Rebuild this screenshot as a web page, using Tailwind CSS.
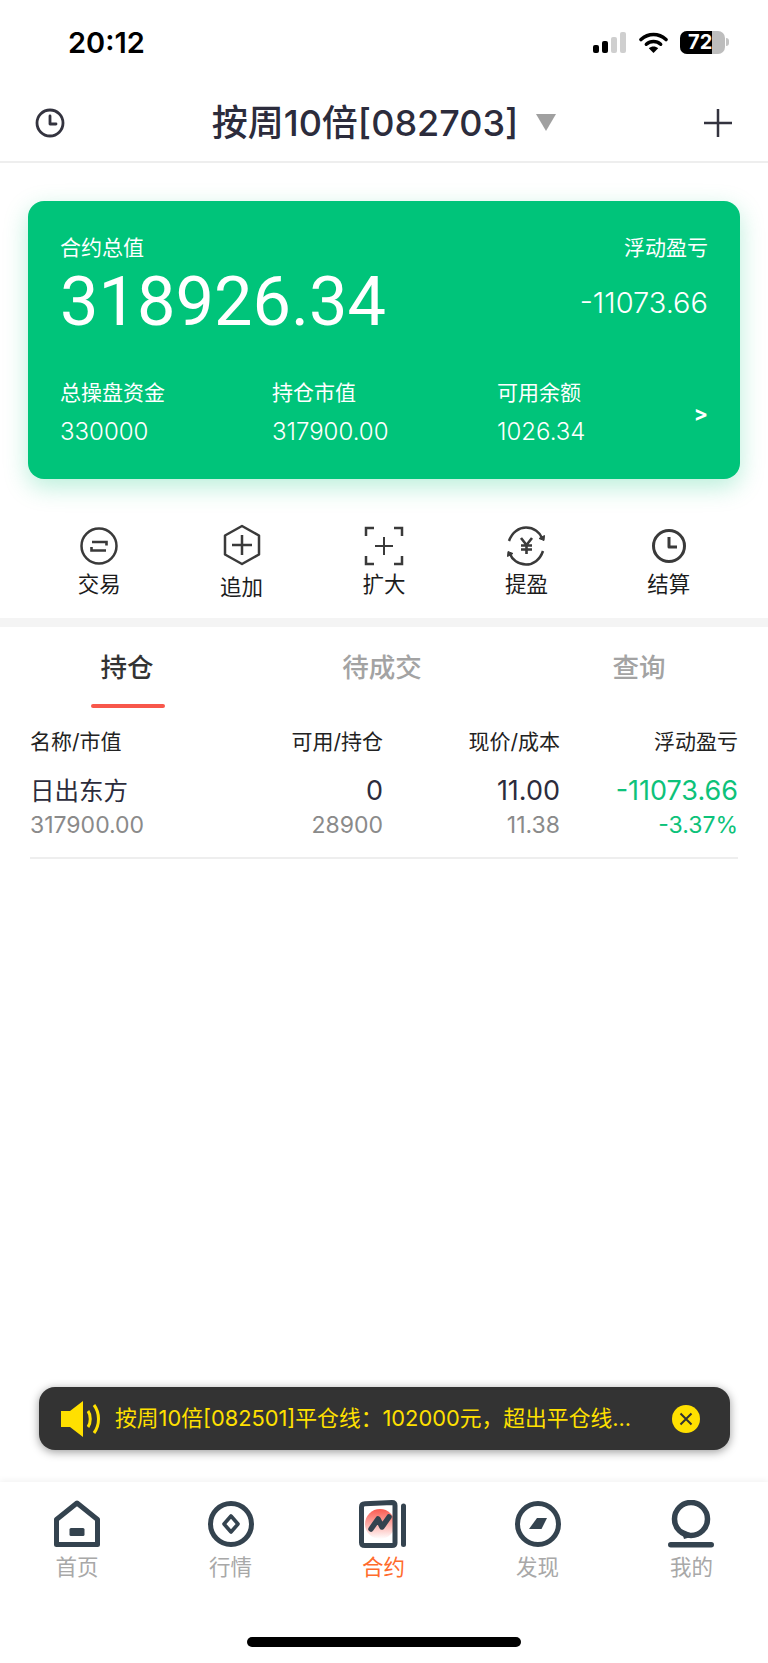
<!DOCTYPE html>
<html lang="zh-CN">
<head>
  <meta charset="UTF-8">
  <meta name="viewport" content="width=device-width, initial-scale=1.0">
  <title>合约</title>
  <script src="https://cdn.jsdelivr.net/npm/@tailwindcss/browser@4"></script>
</head>
<body class="bg-white font-['Inter','Noto_Sans_CJK_SC',sans-serif]">
  <div class="relative w-[768px] h-[1663px] overflow-hidden bg-white flex flex-col">

    <!-- status bar -->
    <div class="h-[84px] shrink-0 flex items-center justify-between pl-[68px] pr-[39px]">
      <span class="text-[29px] font-semibold text-black leading-none">20:12</span>
      <div class="flex items-center">
        <svg width="33" height="21" viewBox="0 0 33 21" class="mr-[13px]">
          <rect x="0" y="13" width="6" height="8" rx="2" fill="#000"/>
          <rect x="9" y="9" width="6" height="12" rx="2" fill="#000"/>
          <rect x="18" y="5" width="6" height="16" rx="2" fill="#cfcfcf"/>
          <rect x="27" y="0" width="6" height="21" rx="2" fill="#cfcfcf"/>
        </svg>
        <svg width="29" height="21" viewBox="0 0 29 21" class="mr-[12px]">
          <path d="M2 7.5C9.500 .8 19.500 .8 27 7.500" fill="none" stroke="#000" stroke-width="3.600" stroke-linecap="round"/>
          <path d="M7.300 12.300C11.500 8.500 17.500 8.500 21.700 12.300" fill="none" stroke="#000" stroke-width="3.400" stroke-linecap="round"/>
          <path d="M14.500 21L9.800 16.200C12.600 13.900 16.400 13.900 19.200 16.200Z" fill="#000"/>
        </svg>
        <div class="relative w-[45px] h-[23px] rounded-[7px] overflow-hidden bg-[#bdbdbd]">
          <div class="absolute left-0 top-0 bottom-0 w-[32px] bg-black"></div>
          <span class="absolute left-[8px] top-0 text-[20px] leading-[23px] font-bold text-white">72</span>
        </div>
        <div class="w-[3px] h-[8px] rounded-r-full bg-[#c4c4c4] ml-[1px]"></div>
      </div>
    </div>

    <!-- header -->
    <div class="h-[79px] shrink-0 border-b-2 border-[#eeeeee] flex items-center justify-between pl-[35px] pr-[35px]">
      <svg width="30" height="30" viewBox="0 0 30 30" fill="none" stroke="#33333f" stroke-width="2.800">
        <circle cx="15" cy="15" r="13"/>
        <path d="M15 8V16H21" stroke-linecap="round" stroke-linejoin="round"/>
      </svg>
      <div class="flex items-center">
        <span class="text-[36px] leading-none text-[#2c2c3c] font-medium">按周10倍[082703]</span>
        <div class="ml-[18px] w-0 h-0 border-l-[10px] border-r-[10px] border-t-[17px] border-l-transparent border-r-transparent border-t-[#a0a0a0]"></div>
      </div>
      <svg width="30" height="30" viewBox="0 0 30 30" fill="none" stroke="#33333f" stroke-width="2.500">
        <path d="M15 1V29M1 15H29"/>
      </svg>
    </div>

    <!-- summary card -->
    <div class="mt-[38px] mx-[28px] h-[278px] shrink-0 rounded-[16px] bg-[#00c47a] shadow-[0_8px_24px_rgba(0,196,122,0.28)] px-[32px] pt-[33px] text-white flex flex-col">
      <div class="flex justify-between">
        <span class="text-[21px] leading-[28px]">合约总值</span>
        <span class="text-[21px] leading-[28px]">浮动盈亏</span>
      </div>
      <div class="flex justify-between items-center h-[70px] mt-[5px]">
        <span class="text-[68.500px] leading-none font-normal font-['Roboto','Noto_Sans_CJK_SC',sans-serif]">318926.34</span>
        <span class="text-[29px] leading-none font-light">-11073.66</span>
      </div>
      <div class="flex mt-[42px]">
        <div class="w-[212px]">
          <div class="text-[21px] leading-[28px]">总操盘资金</div>
          <div class="text-[24px] leading-[28px] mt-[11px] font-light">330000</div>
        </div>
        <div class="w-[225px]">
          <div class="text-[21px] leading-[28px]">持仓市值</div>
          <div class="text-[24px] leading-[28px] mt-[11px] font-light">317900.00</div>
        </div>
        <div class="flex-1">
          <div class="text-[21px] leading-[28px]">可用余额</div>
          <div class="text-[24px] leading-[28px] mt-[11px] font-light">1026.34</div>
        </div>
        <span class="text-[21px] font-bold self-center mt-[3px]">&gt;</span>
      </div>
    </div>

    <!-- actions -->
    <div class="mt-[47px] px-[28px] grid grid-cols-5 h-[92px] shrink-0 text-[21.5px] text-[#1c1c1c] text-center">
      <div class="flex flex-col items-center">
        <svg width="40" height="40" viewBox="0 0 40 40" fill="none" stroke="#3a3a3a" stroke-width="2.500">
          <circle cx="20" cy="20" r="17.500"/>
          <path d="M13 16H27.500V19.500M27 24.500H12.500V21" stroke-width="2.600"/>
        </svg>
        <span class="leading-[28px] mt-[4px]">交易</span>
      </div>
      <div class="flex flex-col items-center">
        <svg width="40" height="42" viewBox="0 0 40 42" fill="none" stroke="#3a3a3a" stroke-width="2.500" class="-mt-[2px]">
          <path d="M20 2L37 11.500V30.500L20 40L3 30.500V11.500Z" stroke-linejoin="round"/>
          <path d="M20 11V31M10 21H30"/>
        </svg>
        <span class="leading-[28px] mt-[7px]">追加</span>
      </div>
      <div class="flex flex-col items-center">
        <svg width="40" height="40" viewBox="0 0 40 40" fill="none" stroke="#3a3a3a" stroke-width="2.500">
          <path d="M2 10V2H10M30 2H38V10M2 30V38H10M30 38H38V30"/>
          <path d="M20 11V29M11 20H29" stroke-width="2"/>
        </svg>
        <span class="leading-[28px] mt-[4px]">扩大</span>
      </div>
      <div class="flex flex-col items-center">
        <svg width="40" height="40" viewBox="0 0 40 40" fill="none" stroke="#3a3a3a" stroke-width="2.500">
          <path d="M3 15C6 6 13 1.500 20 1.500C28 1.500 34 6.500 36 12"/>
          <path d="M33 12.500L38 14.500L38.500 9.500Z" fill="#3a3a3a" stroke-width="1"/>
          <path d="M37 25C34 34 27 38.500 20 38.500C12 38.500 6 33.500 4 28"/>
          <path d="M7 27.500L2 25.500L1.500 30.500Z" fill="#3a3a3a" stroke-width="1"/>
          <path d="M15 12L20.500 19L26 12M20.500 19V28M15 19.500H26M15 23.500H26" stroke-width="2.600"/>
        </svg>
        <span class="leading-[28px] mt-[4px]">提盈</span>
      </div>
      <div class="flex flex-col items-center">
        <svg width="40" height="40" viewBox="0 0 40 40" fill="none" stroke="#3a3a3a" stroke-width="3">
          <circle cx="20" cy="20" r="15.500"/>
          <path d="M20 11V21H28" stroke-linejoin="round"/>
        </svg>
        <span class="leading-[28px] mt-[4px]">结算</span>
      </div>
    </div>

    <div class="h-[9px] shrink-0 bg-[#f4f4f4]"></div>

    <!-- tabs -->
    <div class="h-[81px] shrink-0 grid grid-cols-[254px_256px_258px] text-[26.5px] text-center text-[#a3a3a3] font-medium">
      <div class="relative flex items-center justify-center h-full text-[#333333]">
        持仓
        <div class="absolute left-[91px] w-[74px] h-[4px] bottom-0 rounded-full bg-[#f8574b]"></div>
      </div>
      <div class="flex items-center justify-center">待成交</div>
      <div class="flex items-center justify-center">查询</div>
    </div>

    <!-- holdings -->
    <div class="mx-[30px] h-[151px] shrink-0 border-b-2 border-[#eeeeee]">
      <div class="grid grid-cols-[190px_163px_177px_178px] text-right pt-[20px] text-[21px] leading-[28px] text-[#222222]">
        <span class="text-left">名称/市值</span>
        <span>可用/持仓</span>
        <span>现价/成本</span>
        <span>浮动盈亏</span>
      </div>
      <div class="grid grid-cols-[190px_163px_177px_178px] text-right mt-[19px] text-[27px] leading-[32px] text-[#2c2c3c]">
        <span class="text-left text-[24.500px]">日出东方</span>
        <span>0</span>
        <span>11.00</span>
        <span class="text-[#0dc27a]">-11073.66</span>
      </div>
      <div class="grid grid-cols-[190px_163px_177px_178px] text-right mt-[2px] text-[23px] leading-[32px] text-[#8a8a8a]">
        <span class="text-left">317900.00</span>
        <span>28900</span>
        <span>11.38</span>
        <span class="text-[#0dc27a]">-3.37%</span>
      </div>
    </div>

    <div class="flex-1"></div>

    <!-- tab bar -->
    <div class="h-[181px] shrink-0 bg-white shadow-[0_-2px_6px_rgba(0,0,0,0.05)] flex flex-col">
      <div class="grid grid-cols-[154px_153px_153px_155px_153px] pt-[18px] text-[21.5px] text-center text-[#a8a8a8]">
        <div class="flex flex-col items-center">
          <svg width="48" height="48" viewBox="0 0 48 48" fill="none" stroke="#34434f" stroke-width="5">
            <path d="M3.500 44.500V19.500L24 3L44.500 19.500V44.500Z" stroke-linejoin="round"/>
            <rect x="16.500" y="28" width="15" height="8" rx="1.500" fill="#34434f" stroke="none"/>
          </svg>
          <span class="leading-[28px] mt-[5px]">首页</span>
        </div>
        <div class="flex flex-col items-center">
          <svg width="48" height="48" viewBox="0 0 48 48" fill="none" stroke="#34434f" stroke-width="5">
            <circle cx="24" cy="24" r="20.500"/>
            <path d="M24 16L31 24L24 32L17 24Z" stroke-width="3.600" stroke-linejoin="round"/>
          </svg>
          <span class="leading-[28px] mt-[5px]">行情</span>
        </div>
        <div class="flex flex-col items-center text-[#ff6b2c]">
          <svg width="50" height="48" viewBox="0 0 50 48" fill="none" stroke="#34434f" stroke-width="5">
            <defs>
              <linearGradient id="contractGlow" x1="0" y1="0" x2="0" y2="1">
                <stop offset="0" stop-color="#fb5a50"/>
                <stop offset="1" stop-color="#ffffff"/>
              </linearGradient>
            </defs>
            <circle cx="21" cy="24" r="15" fill="url(#contractGlow)" stroke="none"/>
            <path d="M6 3.800L33 2.500C35 2.500 36 3.500 36 5.500V43C36 44.500 35 45.500 33 45.500H6C4 45.500 2.500 44.500 2.500 42.500V7C2.500 5 4 3.900 6 3.800Z" stroke-linejoin="round"/>
            <path d="M44.500 6V44.500" stroke-linecap="round"/>
            <path d="M12 29L19 19L23 27L30 17" stroke-width="5.500" stroke-linecap="round" stroke-linejoin="round"/>
          </svg>
          <span class="leading-[28px] mt-[5px]">合约</span>
        </div>
        <div class="flex flex-col items-center">
          <svg width="48" height="48" viewBox="0 0 48 48" fill="none" stroke="#34434f" stroke-width="5">
            <circle cx="24" cy="24" r="20.500"/>
            <path d="M23 18H33L27.500 29H15Z" fill="#34434f" stroke="none"/>
          </svg>
          <span class="leading-[28px] mt-[5px]">发现</span>
        </div>
        <div class="flex flex-col items-center">
          <svg width="48" height="48" viewBox="0 0 48 48" fill="none" stroke="#34434f" stroke-width="5.500">
            <circle cx="23" cy="19" r="16.500"/>
            <path d="M13 29L16 39L28 35.500Z" fill="#34434f" stroke="none"/>
            <rect x="0" y="42" width="46" height="5.500" rx="2.750" fill="#34434f" stroke="none"/>
          </svg>
          <span class="leading-[28px] mt-[5px]">我的</span>
        </div>
      </div>
      <div class="mt-auto mb-[16px] mx-auto w-[274px] h-[10px] rounded-full bg-black"></div>
    </div>

    <!-- toast over the page -->
    <div class="absolute left-[39px] top-[1387px] w-[691px] h-[63px] rounded-[16px] bg-[#333333] shadow-[0_2px_10px_rgba(0,0,0,0.4)] flex items-center pl-[22px]">
      <svg width="40" height="36" viewBox="0 0 40 36" class="shrink-0">
        <path d="M0 10H9L22 0V36L9 26H0Z" fill="#ffe000"/>
        <path d="M27 10C30 14 30 22 27 26" fill="none" stroke="#ffe000" stroke-width="3"/>
        <path d="M33 4C39 12 39 24 33 32" fill="none" stroke="#ffe000" stroke-width="3"/>
      </svg>
      <span class="ml-[14px] text-[21.800px] leading-none text-[#ffe000] whitespace-nowrap">按周10倍[082501]平仓线：102000元，超出平仓线...</span>
      <svg width="28" height="28" viewBox="0 0 28 28" class="absolute left-[633px] top-[18px]">
        <circle cx="14" cy="14" r="14" fill="#ffe000"/>
        <path d="M8.500 8.500L19.500 19.500M19.500 8.500L8.500 19.500" stroke="#333333" stroke-width="2"/>
      </svg>
    </div>
  </div>
</body>
</html>
